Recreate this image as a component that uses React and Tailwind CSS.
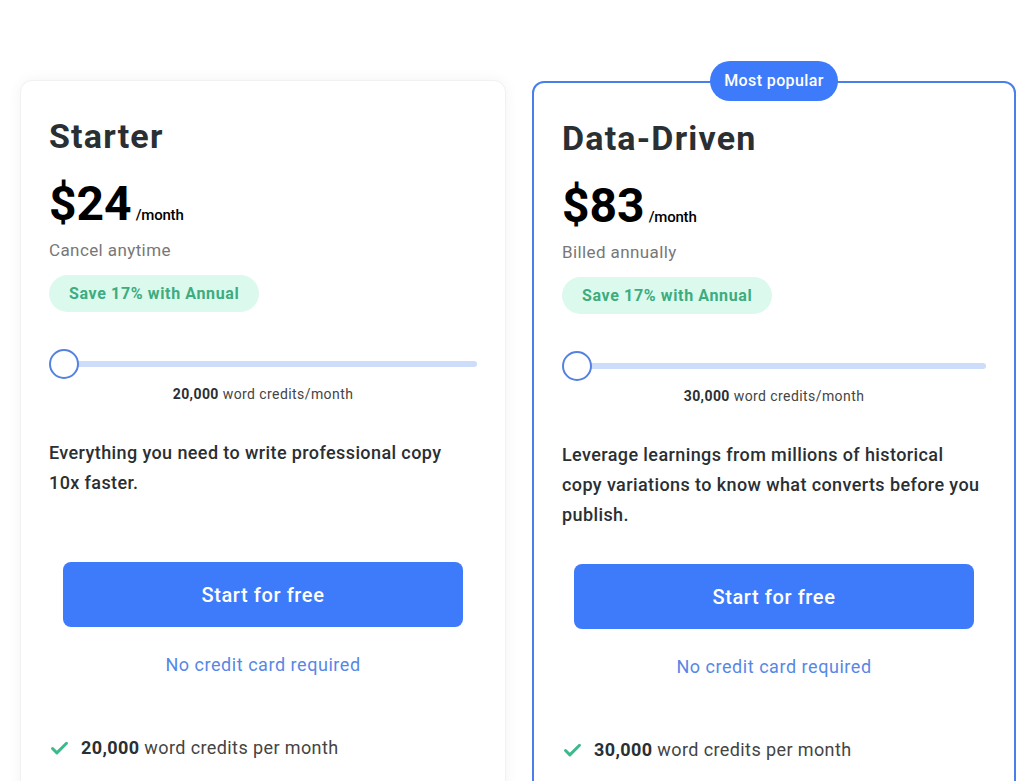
import React from 'react';
import { Check } from 'lucide-react';

const plans = [
  {
    name: 'Starter',
    price: '$24',
    note: 'Cancel anytime',
    credits: '20,000',
    desc: 'Everything you need to write professional copy 10x faster.',
    featured: false,
  },
  {
    name: 'Data-Driven',
    price: '$83',
    note: 'Billed annually',
    credits: '30,000',
    desc: 'Leverage learnings from millions of historical copy variations to know what converts before you publish.',
    featured: true,
  },
];

const PlanCard = ({ plan }) => (
  <div
    className={
      plan.featured
        ? 'relative w-[484px] mt-[1px] rounded-[12px] border-2 border-[#4a7fea] bg-white px-[28px] pt-[35px] h-[720px]'
        : 'relative w-[486px] rounded-[12px] border border-[#f1f1f1] bg-white px-[28px] pt-[35px] h-[720px] shadow-[0_0_14px_rgba(0,0,0,0.05)]'
    }
  >
    {plan.featured && (
      <div className="absolute left-1/2 -translate-x-1/2 -top-[22px] h-[40px] w-[128px] rounded-full bg-[#3e7bfa] flex items-center justify-center text-white text-[16px] font-medium">
        Most popular
      </div>
    )}

    <h2 className="text-[34px] leading-[40px] font-bold text-[#2a2f33] tracking-[0.035em]">{plan.name}</h2>

    <div className="mt-[20px] flex items-baseline h-[56px]">
      <span className="text-[48px] leading-[56px] font-bold text-black tracking-normal">{plan.price}</span>
      <span className="ml-[4px] text-[15px] text-black font-medium tracking-[-0.2px]">/month</span>
    </div>

    <p className="mt-[6px] text-[17px] leading-[24px] text-[#777]">{plan.note}</p>

    <div className="mt-[13px] inline-flex h-[37px] items-center rounded-full bg-[#dcf9ee] px-[20px] text-[16px] font-bold text-[#3dac7e] tracking-[0.04em]">
      Save 17% with Annual
    </div>

    {/* slider */}
    <div className="mt-[37px] relative h-[30px] flex items-center">
      <div className="absolute left-[15px] right-0 h-[6px] rounded-full bg-[#cddcf8]"></div>
      <div className="relative w-[30px] h-[30px] rounded-full border-2 border-[#5582e0] bg-white"></div>
    </div>

    <p className="mt-[5px] text-center text-[14px] leading-[20px] text-[#444] tracking-[0.03em]">
      <span className="font-bold text-[#2a2f33]">{plan.credits}</span> word credits/month
    </p>

    <p className="mt-[34px] max-w-[424px] min-h-[90px] text-[18px] leading-[30px] font-medium text-[#2a2f33]">{plan.desc}</p>

    <button className="mt-[34px] mx-auto flex w-[400px] h-[65px] items-center justify-center rounded-[8px] bg-[#3e7bfa] text-white text-[20px] font-medium tracking-[0.03em]">
      Start for free
    </button>

    <p className="mt-[25px] text-center text-[18px] leading-[26px] text-[#5687e6] tracking-[0.03em]">No credit card required</p>

    <div className="mt-[57px] flex items-center gap-[11px] text-[18px] leading-[26px] text-[#444]">
      <Check className="w-[21px] h-[21px] text-[#3cba8c]" strokeWidth={3.4} />
      <span>
        <span className="font-bold text-[#2a2f33]">{plan.credits}</span> word credits per month
      </span>
    </div>
  </div>
);

const App = () => {
  return (
    <div className="min-h-screen bg-white overflow-hidden font-['Roboto',sans-serif] tracking-[0.025em]">
      <div className="flex items-start gap-[26px] pl-[20px] pt-[80px]">
        {plans.map((plan) => (
          <PlanCard key={plan.name} plan={plan} />
        ))}
      </div>
    </div>
  );
};

export default App;
